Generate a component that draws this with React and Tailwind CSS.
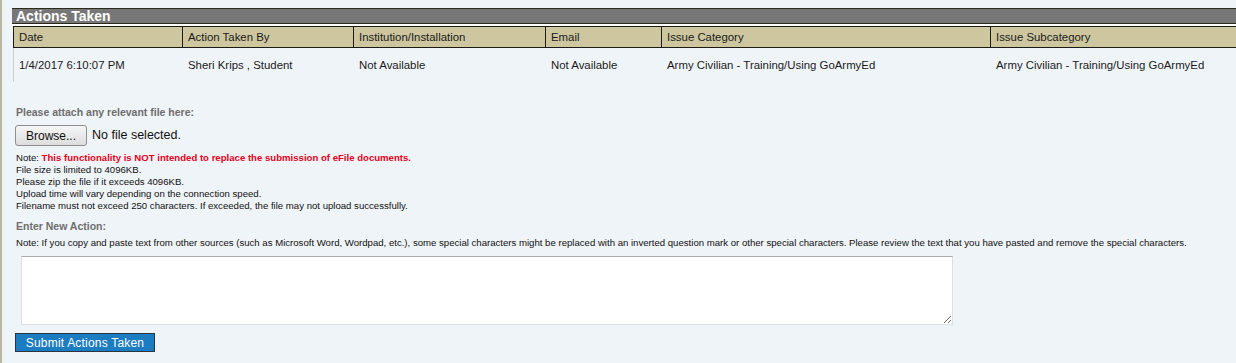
export default function App() {
  const cols = [
    { w: "w-[169px]", h: "Date", d: "1/4/2017 6:10:07 PM" },
    { w: "w-[171px]", h: "Action Taken By", d: "Sheri Krips , Student" },
    { w: "w-[192px]", h: "Institution/Installation", d: "Not Available" },
    { w: "w-[116px]", h: "Email", d: "Not Available" },
    { w: "w-[329px]", h: "Issue Category", d: "Army Civilian - Training/Using GoArmyEd" },
    { w: "w-[260px]", h: "Issue Subcategory", d: "Army Civilian - Training/Using GoArmyEd" },
  ];
  return (
    <div className="w-[1236px] h-[363px] bg-[#eff4f8] border-l-2 border-[#bab59f] overflow-hidden font-['Liberation_Sans',Arial,sans-serif]">
      <div className="pl-[10px] pt-[8px]">
        <div className="w-[1240px] h-[16px] bg-[#777777] border-t border-b border-[#2b2a1f] flex items-center pl-[4px]">
          <span className="text-white font-bold text-[14px] leading-none">Actions Taken</span>
        </div>
        <div className="h-[2px] bg-white w-[1240px]" />
        <div className="ml-[1px] w-[1240px]">
          <div className="flex h-[22px] bg-[#cdc69f] border-t border-b border-l border-[#1d1c14]">
            {cols.map((c, i) => (
              <div
                key={i}
                className={`${c.w} shrink-0 flex items-center pl-[5px] pt-[1px] text-[11.4px] text-[#1a1a1a] ${i < cols.length - 1 ? "border-r border-[#1d1c14]" : ""}`}
              >
                {c.h}
              </div>
            ))}
          </div>
          <div className="flex h-[34px] border-l border-[#cfcfc4]">
            {cols.map((c, i) => (
              <div
                key={i}
                className={`${c.w} shrink-0 flex items-center pl-[5px] pt-[1px] text-[11.4px] text-[#1a1a1a] ${i < cols.length - 1 ? "border-r border-transparent" : ""}`}
              >
                {c.d}
              </div>
            ))}
          </div>
        </div>
      </div>

      <div className="pl-[13px] pt-[24px]">
        <div className="pl-[1px] text-[10.5px] font-bold text-[#6e6e6e] leading-[12px]">
          Please attach any relevant file here:
        </div>
        <div className="flex items-center mt-[7px] h-[21px]">
          <button className="w-[72px] h-[21px] border border-[#8e8e8e] rounded-[3px] bg-gradient-to-b from-[#f6f6f6] to-[#dddddd] text-[12px] text-[#111] leading-none">
            Browse...
          </button>
          <span className="ml-[5px] text-[12.5px] text-[#111]">No file selected.</span>
        </div>
        <div className="pl-[1px] mt-[6px] text-[9.6px] leading-[12px] text-[#111]">
          <div>
            Note: <span className="font-bold text-[#e8001c]">This functionality is NOT intended to replace the submission of eFile documents.</span>
          </div>
          <div>File size is limited to 4096KB.</div>
          <div>Please zip the file if it exceeds 4096KB.</div>
          <div>Upload time will vary depending on the connection speed.</div>
          <div>Filename must not exceed 250 characters. If exceeded, the file may not upload successfully.</div>
        </div>
        <div className="pl-[1px] mt-[8px] text-[10.5px] font-bold text-[#6e6e6e] leading-[12px]">Enter New Action:</div>
        <div className="pl-[1px] mt-[5px] text-[9.6px] leading-[12px] text-[#111] whitespace-nowrap">
          Note: If you copy and paste text from other sources (such as Microsoft Word, Wordpad, etc.), some special characters might be replaced with an inverted question mark or other special characters. Please review the text that you have pasted and remove the special characters.
        </div>
        <textarea className="block ml-[6px] mt-[7px] w-[932px] h-[69px] bg-white border border-[#dcdfe2] border-t-[#a9abad] outline-none" />
        <button className="block mt-[8px] w-[140px] h-[19px] bg-[#1c7cc2] border border-[#2b3540] text-white text-[12px] leading-none tracking-[0.2px]">
          Submit Actions Taken
        </button>
      </div>
    </div>
  );
}
